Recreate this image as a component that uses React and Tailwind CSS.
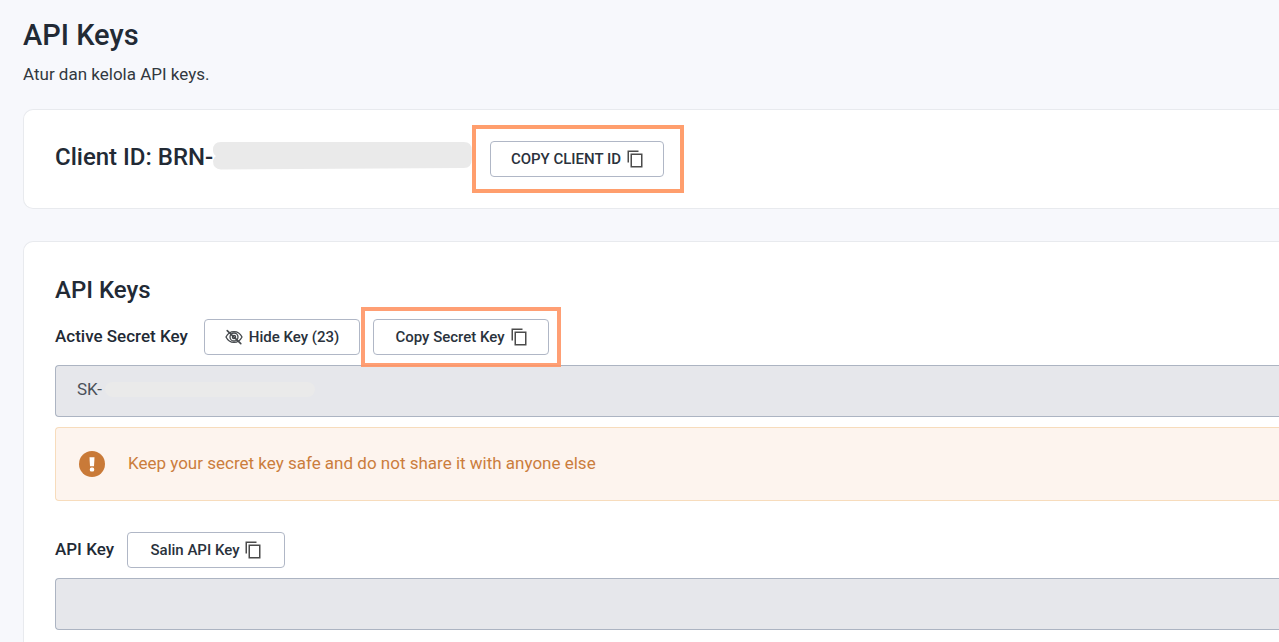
import { useState } from "react";

const buttonClass =
  "flex h-9 items-center justify-center rounded-[4px] border border-[#b0b7c6] bg-white text-[15px] font-medium text-[#2a323c] hover:bg-slate-50";

const inputClass =
  "block h-[52px] w-full rounded-l-[4px] border border-r-0 border-[#acb4c2] bg-[#e6e7eb] px-[21px] pb-1 text-[17px] text-[#4b5159] outline-none";

function CopyIcon() {
  return (
    <svg
      viewBox="0 0 16 18"
      className="h-[18px] w-4 shrink-0"
      fill="none"
      stroke="#4b4b4b"
      strokeWidth="1.5"
      aria-hidden="true"
    >
      <path d="M1.25 12.5V1.25H11.5" />
      <path d="M4.25 4.25H14.75V16.75H4.25Z" />
    </svg>
  );
}

function EyeOffIcon() {
  return (
    <svg
      viewBox="0 0 18 16"
      className="h-4 w-[18px] shrink-0"
      fill="none"
      stroke="#44484c"
      strokeWidth="1.3"
      strokeLinecap="round"
      aria-hidden="true"
    >
      <path d="M1 8C2.8 4.4 5.6 2.6 9 2.6S15.2 4.4 17 8C15.2 11.6 12.4 13.4 9 13.4S2.8 11.6 1 8Z" />
      <circle cx="9" cy="8" r="4" />
      <circle cx="9" cy="8" r="1.6" />
      <path d="M2.2 1.6 15.8 14.6" strokeWidth="1.6" />
    </svg>
  );
}

function AlertIcon() {
  return (
    <svg viewBox="0 0 26 26" className="size-[26px] shrink-0" aria-hidden="true">
      <circle cx="13" cy="13" r="13" fill="#c97a38" />
      <path d="M10.5 6.2h5l-.5 9h-4Z" fill="#fff" />
      <rect x="10.8" y="16.6" width="4.4" height="4" rx="1.6" fill="#fff" />
    </svg>
  );
}

export default function App() {
  const [hidden, setHidden] = useState(false);

  return (
    <main className="min-h-screen bg-[#f7f8fc] pt-[15px] pb-8 pl-[23px] font-[Roboto,sans-serif] text-[#222a35]">
      <h1 className="text-[29px] leading-10 font-medium">API Keys</h1>
      <p className="mt-[5px] text-[17px] leading-7 text-[#32383f]">
        Atur dan kelola API keys.
      </p>

      {/* Client ID */}
      <section className="mt-[21px] rounded-l-[10px] border border-r-0 border-[#e8eaee] bg-white py-[31px] pl-[31px]">
        <div className="flex items-start">
          <h2 className="flex w-[417px] items-start text-2xl leading-8 font-medium whitespace-nowrap">
            Client ID: BRN-
            <svg
              viewBox="0 -1 260 29"
              preserveAspectRatio="none"
              className="h-[29px] min-w-0 flex-1"
              aria-hidden="true"
            >
              <path
                d="M8 0H252Q260 0 260 8V17Q260 26 252 26L8 27.5Q0 27 0 19Q0 16 3 14Q0 12 0 8Q0 0 8 0Z"
                fill="#eaeaea"
              />
            </svg>
          </h2>
          <div className="relative ml-[18px]">
            <button
              type="button"
              className={`${buttonClass} w-[174px] gap-[6px]`}
            >
              COPY CLIENT ID
              <CopyIcon />
            </button>
            <div className="pointer-events-none absolute -top-4 -right-5 -bottom-4 -left-[18px] border-4 border-[#ff9e6d]" />
          </div>
        </div>
      </section>

      {/* Secret and API keys */}
      <section className="mt-8 rounded-l-[10px] border border-r-0 border-[#e8eaee] bg-white py-8 pl-[31px]">
        <h2 className="text-2xl leading-8 font-medium">API Keys</h2>

        <div className="mt-[13px] flex items-center">
          <label
            htmlFor="secret-key"
            className="w-[149px] text-[17px] font-medium whitespace-nowrap"
          >
            Active Secret Key
          </label>
          <button
            type="button"
            className={`${buttonClass} w-[156px] gap-[6px]`}
            onClick={() => setHidden((v) => !v)}
          >
            <EyeOffIcon />
            Hide Key (23)
          </button>
          <div className="relative z-10 ml-[13px]">
            <button
              type="button"
              className={`${buttonClass} w-[176px] gap-[6px]`}
            >
              Copy Secret Key
              <CopyIcon />
            </button>
            <div className="pointer-events-none absolute -inset-3 border-4 border-[#ff9565]/90" />
          </div>
        </div>
        <div className="relative mt-[10px]">
          <input
            id="secret-key"
            type={hidden ? "password" : "text"}
            className={inputClass}
            value="SK-"
            readOnly
          />
          <span className="absolute top-[17px] left-[50px] h-[15px] w-[210px] rounded-full bg-[#eaeaea]" />
        </div>

        <div
          role="alert"
          className="mt-[10px] flex h-[74px] items-center gap-[23px] rounded-l-[4px] border border-r-0 border-[#f7dcbc] bg-[#fdf4ee] pl-[23px] text-[17px] text-[#cb7d3d]"
        >
          <AlertIcon />
          <p>Keep your secret key safe and do not share it with anyone else</p>
        </div>

        <div className="mt-[31px] flex items-center">
          <label
            htmlFor="api-key"
            className="w-[72px] text-[17px] font-medium whitespace-nowrap"
          >
            API Key
          </label>
          <button
            type="button"
            className={`${buttonClass} w-[158px] gap-[6px]`}
          >
            Salin API Key
            <CopyIcon />
          </button>
        </div>
        <input
          id="api-key"
          type="text"
          className={`${inputClass} mt-[10px]`}
          value=""
          readOnly
        />
      </section>
    </main>
  );
}
